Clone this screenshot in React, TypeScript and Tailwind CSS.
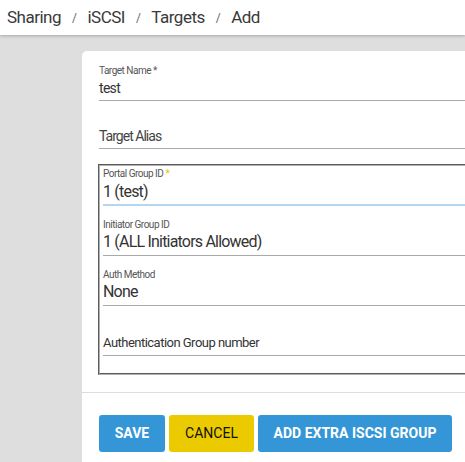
import React from 'react';

const crumbs = ['Sharing', 'iSCSI', 'Targets', 'Add'];

function Underlined({
  label,
  value,
  required,
  active,
}: {
  label: string;
  value: string;
  required?: boolean;
  active?: boolean;
}) {
  return (
    <div className={active ? 'border-b-2 border-[#b4d6f1]' : 'border-b border-[#aaaaaa]'}>
      <div className="h-[12px] text-[10px] leading-[12px] text-[#555] tracking-[-0.05em]">
        {label}
        {required && <span className="text-[#e5c100]"> *</span>}
      </div>
      <div
        className={`h-[20px] text-[16px] leading-[20px] text-[#333] tracking-[-0.05em] ${
          active ? 'mt-[2px] mb-[2px]' : 'mt-[1px] mb-[3px]'
        }`}
      >
        {value}
      </div>
    </div>
  );
}

export default function App() {
  return (
    <div className="w-[465px] h-[462px] overflow-hidden bg-[#dedede] font-['Roboto',sans-serif]">
      {/* Breadcrumb bar */}
      <div className="relative z-10 h-[35px] bg-white shadow-[0_1px_3px_rgba(0,0,0,0.25)] flex items-center pl-[7px] text-[17px] text-[#3a3a3a] tracking-[-0.03em]">
        {crumbs.map((c, i) => (
          <React.Fragment key={c}>
            {i > 0 && <span className="mx-[11px] text-[12px] text-[#666]">/</span>}
            <span>{c}</span>
          </React.Fragment>
        ))}
      </div>

      {/* Card */}
      <div className="ml-[82px] mt-[16px] w-[420px] bg-white rounded-tl-[5px] pt-[14px] pb-[20px]">
        <div className="pl-[17px]">
          {/* Target Name */}
          <div className="border-b border-[#aaaaaa]">
            <div className="h-[12px] text-[10px] leading-[12px] text-[#555] tracking-[-0.05em]">
              Target Name *
            </div>
            <div className="mt-[2px] mb-[3px] h-[18px] text-[14px] leading-[18px] text-[#333] tracking-[-0.05em]">
              test
            </div>
          </div>

          {/* Target Alias */}
          <div className="mt-[26px] border-b border-[#aaaaaa]">
            <div className="mb-[3px] h-[18px] text-[14px] leading-[18px] text-[#444] tracking-[-0.07em]">
              Target Alias
            </div>
          </div>

          {/* Group fieldset */}
          <fieldset className="mt-[15px] -ml-[1px] border-2 [border-style:groove] border-[#b0b0b0] pl-[3px] pt-[2px] pb-[17px]">
            <Underlined label="Portal Group ID" value="1 (test)" required active />
            <div className="mt-[13px]">
              <Underlined label="Initiator Group ID" value="1 (ALL Initiators Allowed)" />
            </div>
            <div className="mt-[13px]">
              <Underlined label="Auth Method" value="None" />
            </div>
            <div className="mt-[28px] border-b border-[#aaaaaa]">
              <div className="mb-[3px] h-[18px] text-[13px] leading-[18px] text-[#333] tracking-[-0.04em]">
                Authentication Group number
              </div>
            </div>
          </fieldset>
        </div>

        {/* Divider */}
        <div className="mt-[17px] border-t border-[#dddddd]" />

        {/* Actions */}
        <div className="mt-[22px] pl-[17px] flex gap-[4px]">
          <button className="h-[37px] w-[66px] rounded-[3px] bg-[#3596d7] text-white text-[14px] font-bold">
            SAVE
          </button>
          <button className="h-[37px] w-[85px] rounded-[3px] bg-[#ebcb00] text-[#111] text-[14px]">
            CANCEL
          </button>
          <button className="h-[37px] w-[194px] rounded-[3px] bg-[#3596d7] text-white text-[14px] font-bold">
            ADD EXTRA ISCSI GROUP
          </button>
        </div>
      </div>
    </div>
  );
}
